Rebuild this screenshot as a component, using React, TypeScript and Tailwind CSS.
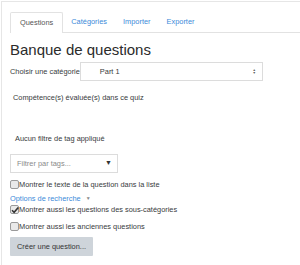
import React from 'react';

function Box({ checked }: { checked?: boolean }) {
  return (
    <span className="relative inline-block w-[9px] h-[9px] shrink-0 rounded-[2px] border border-[#9a9a9a] bg-[#e9e9e9]">
      {checked && (
        <svg viewBox="0 0 10 10" className="absolute -left-px -top-px w-[10px] h-[10px]">
          <path d="M2 5.2 L4.1 7.3 L8.3 2.4" fill="none" stroke="#333" strokeWidth="1.6" />
        </svg>
      )}
    </span>
  );
}

export default function App() {
  const tabs = ['Catégories', 'Importer', 'Exporter'];

  return (
    <div className="w-[300px] h-[265px] overflow-hidden bg-white pt-px pl-px font-['Liberation_Sans',Arial,sans-serif] text-[7.4px] text-[#373a3c]">
      <div className="h-[300px] border-t border-l border-[#e6e6e6] pl-[8px] pt-[10px]">
        <ul className="flex h-[21px] border-b border-[#e2e2e2]">
          <li className="h-[21px] px-[9px] flex items-center border border-b-0 border-[#e2e2e2] bg-white -mb-px rounded-t-[2px] text-[#555]">
            Questions
          </li>
          {tabs.map(t => (
            <li key={t} className="h-[20px] px-[8px] flex items-center text-[#3b8ad9]">
              {t}
            </li>
          ))}
        </ul>

        <h2 className="mt-[7.5px] text-[15px] leading-[18px] text-[#2b2b2b]">Banque de questions</h2>

        <div className="mt-[3.5px] flex items-center">
          <span>Choisir une catégorie</span>
          <div className="w-[183px] h-[19px] flex items-center justify-between border border-[#dcdcdc] pl-[19px] pr-[6px]">
            <span>Part 1</span>
            <span className="flex flex-col items-center text-[#666] leading-none">
              <span className="text-[3.5px] leading-[3px]">▲</span>
              <span className="text-[3.5px] leading-[3px]">▼</span>
            </span>
          </div>
        </div>

        <div className="mt-[12px] pl-[3px] h-[10px] leading-[10px]">Compétence(s) évaluée(s) dans ce quiz</div>

        <div className="mt-[31px] pl-[5px] h-[10px] leading-[10px]">Aucun filtre de tag appliqué</div>

        <div className="mt-[10px] w-[108px] h-[19px] flex items-center justify-between border border-[#dcdcdc] pl-[6px] pr-[5px]">
          <span className="text-[#8a8a8a]">Filtrer par tags...</span>
          <span className="text-[7px] text-[#333]">▼</span>
        </div>

        <label className="mt-[6px] flex items-center h-[11px]">
          <Box />
          <span>Montrer le texte de la question dans la liste</span>
        </label>

        <div className="mt-[4px] flex items-center h-[10px] text-[#3b8ad9]">
          <span>Options de recherche</span>
          <span className="ml-[5px] text-[#888] text-[5px]">▼</span>
        </div>

        <label className="flex items-center h-[11px]">
          <Box checked />
          <span>Montrer aussi les questions des sous-catégories</span>
        </label>

        <label className="mt-[6px] flex items-center h-[11px]">
          <Box />
          <span>Montrer aussi les anciennes questions</span>
        </label>

        <button className="mt-[5px] w-[83px] h-[19px] bg-[#ced4da] rounded-[1px] text-[#333] text-[7.4px] flex items-center justify-center">
          Créer une question...
        </button>
      </div>
    </div>
  );
}
